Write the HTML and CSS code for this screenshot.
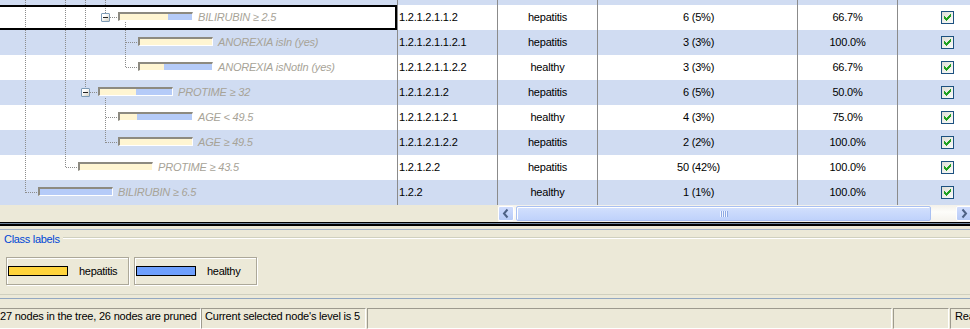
FILE: index.html
```html
<!DOCTYPE html>
<html>
<head>
<meta charset="utf-8">
<link rel="stylesheet" href="styles.css">
</head>
<body>
<div class="app">
  <div class="grid-wrap">
    <div class="row top alt">
      <div class="c tree"></div><div class="c id"></div><div class="c cls"></div>
      <div class="c cnt"><span class="cbar" style="width:31px"></span></div>
      <div class="c pct"></div><div class="c chk"></div>
    </div>
    <div class="row">
      <div class="c tree l5 sel"><span class="exp"></span><span class="nbar" style="--h:66.7%"></span><span class="nlabel">BILIRUBIN ≥ 2.5</span></div>
      <div class="c id">1.2.1.2.1.1.2</div><div class="c cls">hepatitis</div>
      <div class="c cnt"><span class="cbar" style="width:9px"></span><span class="num">6 (5%)</span></div>
      <div class="c pct">66.7%</div><div class="c chk"><span class="box"><svg width="11" height="11" viewBox="0 0 11 11" shape-rendering="crispEdges"><path fill="#21a121" d="M8 2h1v1H8z M7 3h2v1H7z M2 4h1v1H2z M6 4h3v1H6z M2 5h2v1H2z M5 5h3v1H5z M2 6h5v1H2z M3 7h3v1H3z M4 8h1v1H4z"/></svg></span></div>
    </div>
    <div class="row alt">
      <div class="c tree l6"><span class="nbar" style="--h:100%"></span><span class="nlabel">ANOREXIA isIn (yes)</span></div>
      <div class="c id">1.2.1.2.1.1.2.1</div><div class="c cls">hepatitis</div>
      <div class="c cnt"><span class="cbar" style="width:4px"></span><span class="num">3 (3%)</span></div>
      <div class="c pct">100.0%</div><div class="c chk"><span class="box"><svg width="11" height="11" viewBox="0 0 11 11" shape-rendering="crispEdges"><path fill="#21a121" d="M8 2h1v1H8z M7 3h2v1H7z M2 4h1v1H2z M6 4h3v1H6z M2 5h2v1H2z M5 5h3v1H5z M2 6h5v1H2z M3 7h3v1H3z M4 8h1v1H4z"/></svg></span></div>
    </div>
    <div class="row">
      <div class="c tree l6"><span class="nbar" style="--h:33.3%"></span><span class="nlabel">ANOREXIA isNotIn (yes)</span></div>
      <div class="c id">1.2.1.2.1.1.2.2</div><div class="c cls">healthy</div>
      <div class="c cnt"><span class="cbar" style="width:4px"></span><span class="num">3 (3%)</span></div>
      <div class="c pct">66.7%</div><div class="c chk"><span class="box"><svg width="11" height="11" viewBox="0 0 11 11" shape-rendering="crispEdges"><path fill="#21a121" d="M8 2h1v1H8z M7 3h2v1H7z M2 4h1v1H2z M6 4h3v1H6z M2 5h2v1H2z M5 5h3v1H5z M2 6h5v1H2z M3 7h3v1H3z M4 8h1v1H4z"/></svg></span></div>
    </div>
    <div class="row alt">
      <div class="c tree l4"><span class="exp"></span><span class="nbar" style="--h:50%"></span><span class="nlabel">PROTIME ≥ 32</span></div>
      <div class="c id">1.2.1.2.1.2</div><div class="c cls">hepatitis</div>
      <div class="c cnt"><span class="cbar" style="width:9px"></span><span class="num">6 (5%)</span></div>
      <div class="c pct">50.0%</div><div class="c chk"><span class="box"><svg width="11" height="11" viewBox="0 0 11 11" shape-rendering="crispEdges"><path fill="#21a121" d="M8 2h1v1H8z M7 3h2v1H7z M2 4h1v1H2z M6 4h3v1H6z M2 5h2v1H2z M5 5h3v1H5z M2 6h5v1H2z M3 7h3v1H3z M4 8h1v1H4z"/></svg></span></div>
    </div>
    <div class="row">
      <div class="c tree l5"><span class="nbar" style="--h:24%"></span><span class="nlabel">AGE &lt; 49.5</span></div>
      <div class="c id">1.2.1.2.1.2.1</div><div class="c cls">healthy</div>
      <div class="c cnt"><span class="cbar" style="width:6px"></span><span class="num">4 (3%)</span></div>
      <div class="c pct">75.0%</div><div class="c chk"><span class="box"><svg width="11" height="11" viewBox="0 0 11 11" shape-rendering="crispEdges"><path fill="#21a121" d="M8 2h1v1H8z M7 3h2v1H7z M2 4h1v1H2z M6 4h3v1H6z M2 5h2v1H2z M5 5h3v1H5z M2 6h5v1H2z M3 7h3v1H3z M4 8h1v1H4z"/></svg></span></div>
    </div>
    <div class="row alt">
      <div class="c tree l5"><span class="nbar" style="--h:100%"></span><span class="nlabel">AGE ≥ 49.5</span></div>
      <div class="c id">1.2.1.2.1.2.2</div><div class="c cls">hepatitis</div>
      <div class="c cnt"><span class="cbar" style="width:3px"></span><span class="num">2 (2%)</span></div>
      <div class="c pct">100.0%</div><div class="c chk"><span class="box"><svg width="11" height="11" viewBox="0 0 11 11" shape-rendering="crispEdges"><path fill="#21a121" d="M8 2h1v1H8z M7 3h2v1H7z M2 4h1v1H2z M6 4h3v1H6z M2 5h2v1H2z M5 5h3v1H5z M2 6h5v1H2z M3 7h3v1H3z M4 8h1v1H4z"/></svg></span></div>
    </div>
    <div class="row">
      <div class="c tree l3"><span class="nbar" style="--h:100%"></span><span class="nlabel">PROTIME ≥ 43.5</span></div>
      <div class="c id">1.2.1.2.2</div><div class="c cls">hepatitis</div>
      <div class="c cnt"><span class="cbar" style="width:81px"></span><span class="num">50 (42%)</span></div>
      <div class="c pct">100.0%</div><div class="c chk"><span class="box"><svg width="11" height="11" viewBox="0 0 11 11" shape-rendering="crispEdges"><path fill="#21a121" d="M8 2h1v1H8z M7 3h2v1H7z M2 4h1v1H2z M6 4h3v1H6z M2 5h2v1H2z M5 5h3v1H5z M2 6h5v1H2z M3 7h3v1H3z M4 8h1v1H4z"/></svg></span></div>
    </div>
    <div class="row alt">
      <div class="c tree l1"><span class="nbar" style="--h:0%"></span><span class="nlabel">BILIRUBIN ≥ 6.5</span></div>
      <div class="c id">1.2.2</div><div class="c cls">healthy</div>
      <div class="c cnt"><span class="cbar" style="width:1px"></span><span class="num">1 (1%)</span></div>
      <div class="c pct">100.0%</div><div class="c chk"><span class="box"><svg width="11" height="11" viewBox="0 0 11 11" shape-rendering="crispEdges"><path fill="#21a121" d="M8 2h1v1H8z M7 3h2v1H7z M2 4h1v1H2z M6 4h3v1H6z M2 5h2v1H2z M5 5h3v1H5z M2 6h5v1H2z M3 7h3v1H3z M4 8h1v1H4z"/></svg></span></div>
    </div>
    <svg class="lines" width="397" height="205" viewBox="0 0 397 205" shape-rendering="crispEdges">
      <g fill="none" stroke="#8c8c8c" stroke-width="1" stroke-dasharray="1 1">
        <path d="M25.5 0V193 M26 192.5H38"/>
        <path d="M65.5 0V168 M66 167.5H78"/>
        <path d="M85.5 0V88 M90 92.5H98"/>
        <path d="M105.5 0V13 M110 17.5H118"/>
        <path d="M105.5 98V143 M106 117.5H118 M106 142.5H118"/>
        <path d="M125.5 22V68 M126 42.5H138 M126 67.5H138"/>
      </g>
    </svg>
  </div>

  <div class="hscroll">
    <div class="hs-gap"></div>
    <div class="hs-bar">
      <div class="hs-btn"><svg width="14" height="13" viewBox="0 0 14 13"><polyline points="8.5,2.5 5,6.5 8.5,10.5" fill="none" stroke="#4d6185" stroke-width="2"/></svg></div>
      <div class="hs-thumb"><span class="grip"></span></div>
      <div class="hs-track"></div>
      <div class="hs-btn"><svg width="14" height="13" viewBox="0 0 14 13"><polyline points="5.5,2.5 9,6.5 5.5,10.5" fill="none" stroke="#4d6185" stroke-width="2"/></svg></div>
    </div>
  </div>

  <div class="splitter"></div>

  <div class="panel">
    <div class="gb-head"><span class="gb-title">Class labels</span><span class="gb-line"></span></div>
    <div class="legend">
      <div class="item"><span class="sw hep"></span><span>hepatitis</span></div>
      <div class="item"><span class="sw hea"></span><span>healthy</span></div>
    </div>
    <div class="gb-foot"></div>
  </div>

  <div class="status">
    <div class="sp p1">27 nodes in the tree, 26 nodes are pruned</div>
    <div class="sp p2">Current selected node's level is 5</div>
    <div class="sp p3"></div>
    <div class="sp p4"></div>
    <div class="sp p5">Ready</div>
  </div>
</div>
</body>
</html>
```

FILE: styles.css
```css
* { box-sizing: border-box; }
html, body { margin: 0; padding: 0; }
body {
  background: #ece9d8;
  font-family: "Liberation Sans", Arial, sans-serif;
  font-size: 11px;
  line-height: 13px;
  letter-spacing: -0.2px;
  color: #000;
}
.app {
  width: 970px;
  height: 329px;
  overflow: hidden;
  display: flex;
  flex-direction: column;
}

/* grid */
.grid-wrap { position: relative; width: 998px; height: 205px; flex: none; }
.row {
  display: grid;
  grid-template-columns: 398px 100px 100px 200px 100px 100px;
  height: 25px;
  background: #fff;
}
.row.alt { background: #d0dcf2; }
.row.top { height: 5px; }
.c {
  border-right: 1px solid #8b8b8b;
  display: flex;
  align-items: center;
  white-space: nowrap;
  min-width: 0;
}
.id { padding-left: 1px; }
.cls, .pct, .chk { justify-content: center; }
.cnt { display: grid; padding-left: 2px; }
.cnt > * { grid-area: 1 / 1; }
.cbar { background: #316ac5; margin: 1px 0; justify-self: start; }
.top .cbar { margin: 0 0 1px; }
.num { justify-self: center; align-self: center; }

.box {
  width: 13px; height: 13px;
  border: 1px solid #1c5180;
  background: linear-gradient(135deg, #dcdcd6 0%, #eeeee9 50%, #fbfbf9 100%);
  display: block;
}
.box svg { display: block; }

/* tree */
.tree { position: relative; }
.l1 { padding-left: 38px; }
.l3 { padding-left: 78px; }
.l4 { padding-left: 98px; }
.l5 { padding-left: 118px; }
.l6 { padding-left: 138px; }
.nbar {
  flex: none;
  width: 75px; height: 9px;
  border-style: solid;
  border-width: 2px 1px 1px 2px;
  border-color: #8d8a80 #fff #fff #8d8a80;
  background: linear-gradient(90deg, #fff5d2 var(--h), #b5cbf8 var(--h));
  margin-bottom: 2px;
}
.nlabel { margin-left: 5px; font-style: italic; color: #a7a397; }
.exp {
  flex: none;
  width: 9px; height: 9px;
  margin: 0 8px 0 -17px;
  border: 1px solid #7d9bb6;
  border-radius: 1px;
  background: linear-gradient(135deg, #fff 30%, #d3d0c3);
  display: flex; align-items: center; justify-content: center;
}
.exp::before { content: ""; width: 5px; height: 1px; background: #222; }
.sel::after {
  content: "";
  position: absolute;
  top: 0; bottom: 0; left: -4px; right: 0;
  border: 2px solid #000;
  z-index: 2;
}
.lines { position: absolute; left: 0; top: 0; z-index: 1; pointer-events: none; }

/* horizontal scrollbar */
.hscroll { display: flex; height: 17px; flex: none; }
.hs-gap { width: 498px; flex: none; }
.hs-bar {
  width: 474px; flex: none;
  display: flex;
  background: linear-gradient(#f3f1ea, #fdfdfa 40%, #f4f2ec);
}
.hs-btn {
  width: 16px; height: 15px; margin: 1px 0;
  border: 1px solid #fff;
  border-radius: 2px;
  background: linear-gradient(#cfdcfd, #b7cbf7);
  display: flex; align-items: center; justify-content: center;
  flex: none;
}
.hs-btn svg { display: block; }
.hs-thumb {
  width: 415px; height: 15px; margin: 1px 0 1px 2px;
  border: 1px solid #a9c0f2;
  border-radius: 2px;
  box-shadow: inset 1px 1px 0 #fff;
  background: linear-gradient(#d3e0fd, #bfd2fb);
  display: flex; align-items: center; justify-content: center;
  flex: none;
}
.grip {
  width: 8px; height: 6px;
  background: repeating-linear-gradient(90deg, #f2f6ff 0 1px, #8eaae4 1px 2px);
}
.hs-track { flex: 1; }

.splitter {
  height: 4px; flex: none;
  background: linear-gradient(#000 0 1px, #6e8299 1px 2px, #000 2px 4px);
}

/* bottom panel */
.panel {
  flex: none;
  margin-top: 3px;
  height: 70px;
  border-top: 1px solid #a3b4c9;
  border-bottom: 1px solid #93a8c1;
  padding-top: 3px;
}
.gb-head { display: flex; align-items: flex-start; padding-left: 4px; }
.gb-title { color: #0046d5; letter-spacing: -0.3px; }
.gb-line {
  flex: 1;
  margin: 4px 0 0 3px;
  border-top: 1px solid #d0d0bf;
  border-bottom: 1px solid #fff;
}
.legend { display: flex; gap: 5px; margin: 11px 0 0 6px; }
.item {
  width: 123px; height: 28px;
  border: 1px solid #aca899;
  box-shadow: inset 1px 1px 0 #fff, 1px 1px 0 #fff;
  display: flex; align-items: center;
  padding-left: 1px;
  letter-spacing: -0.3px;
}
.sw { width: 60px; height: 10px; border: 1px solid #000; margin-right: 11px; flex: none; }
.sw.hep { background: #ffd43c; }
.sw.hea { background: #6e9ffd; }
.gb-foot { margin-top: 9px; border-top: 1px solid #d0d0bf; }

/* status bar */
.status { display: flex; height: 21px; margin-top: 9px; flex: none; }
.sp {
  flex: none;
  height: 21px;
  border: 1px solid;
  border-color: #9d9a8e #fff #fff #9d9a8e;
  padding: 1px 0 0 3px;
  white-space: nowrap;
  overflow: hidden;
}
.p1 { width: 201px; text-align: right; padding: 1px 4px 0 0; border-left: none; }
.p2 { width: 165px; }
.p3 { width: 525px; margin-left: 1px; }
.p4 { width: 56px; margin-left: 1px; }
.p5 { width: 60px; margin-left: 1px; padding-left: 4px; }
```
